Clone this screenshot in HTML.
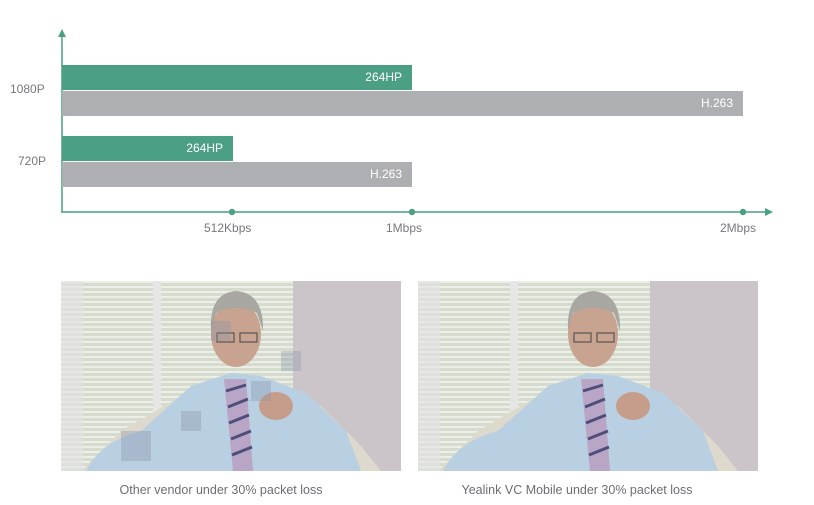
<!DOCTYPE html>
<html><head><style>
body{margin:0;width:814px;height:505px;background:#fff;position:relative;overflow:hidden;font-family:"Liberation Sans",sans-serif}
.t{position:absolute;font-size:12px;color:#77787b}
.b{position:absolute;left:62px;height:25px;color:#fff;font-size:12px;text-align:right;line-height:25px;box-sizing:border-box;padding-right:10px}
.g{background:#4a9f84}.y{background:#aeafb2}
.cap{position:absolute;top:483px;font-size:12.5px;color:#6d6e71;text-align:center;width:340px}
</style></head><body>
<svg width="814" height="260" style="position:absolute;left:0;top:0">
<line x1="62" y1="35" x2="62" y2="212" stroke="#4a9f84" stroke-width="1.5"/>
<polygon points="62,29 58,37 66,37" fill="#4a9f84"/>
<line x1="61" y1="212" x2="766" y2="212" stroke="#4a9f84" stroke-width="1.5"/>
<polygon points="773,212 765,208 765,216" fill="#4a9f84"/>
<circle cx="232" cy="212" r="3.2" fill="#4a9f84"/>
<circle cx="412" cy="212" r="3.2" fill="#4a9f84"/>
<circle cx="743" cy="212" r="3.2" fill="#4a9f84"/>
</svg>
<div class="b g" style="top:65px;width:350px">264HP</div>
<div class="b y" style="top:91px;width:681px">H.263</div>
<div class="b g" style="top:136px;width:171px">264HP</div>
<div class="b y" style="top:162px;width:350px">H.263</div>
<div class="t" style="left:10px;top:82px">1080P</div>
<div class="t" style="left:18px;top:154px">720P</div>
<div class="t" style="left:204px;top:221px">512Kbps</div>
<div class="t" style="left:386px;top:221px">1Mbps</div>
<div class="t" style="left:720px;top:221px">2Mbps</div>
<svg width="0" height="0" style="position:absolute"><defs>
<pattern id="bl" width="4" height="5" patternUnits="userSpaceOnUse"><rect width="4" height="5" fill="#d5dccd"/><rect width="4" height="2" fill="#eceee8"/></pattern>
<g id="sc">
<rect width="340" height="190" fill="#cbc5ca"/>
<rect width="232" height="190" fill="url(#bl)"/>
<rect x="0" width="22" height="190" fill="#e4e4e4" opacity=".6"/>
<rect x="92" width="8" height="190" fill="#e6e6e6"/>
<path d="M20 190 L60 150 L120 115 L200 100 L260 125 L300 165 L320 190Z" fill="#ddd9cc"/>
<path d="M25 190 Q40 160 80 150 L130 105 L170 92 L200 95 L245 112 L285 150 L300 190Z" fill="#b9cfe2"/>
<path d="M163 98 L185 98 L192 190 L172 190Z" fill="#b9a5c6"/>
<path d="M165 110 L185 104 M167 126 L187 118 M168 142 L188 134 M170 158 L190 150 M171 174 L191 166" stroke="#4d4f7a" stroke-width="3"/>
<ellipse cx="175" cy="53" rx="25" ry="33" fill="#c8a490"/>
<path d="M150 50 Q148 12 175 10 Q203 12 202 50 L196 32 Q175 22 155 32Z" fill="#a9a7a2"/>
<rect x="156" y="52" width="17" height="9" fill="none" stroke="#555" stroke-width="1.2"/>
<rect x="179" y="52" width="17" height="9" fill="none" stroke="#555" stroke-width="1.2"/>
<ellipse cx="215" cy="125" rx="17" ry="14" fill="#c69d8a"/>
</g></defs></svg>
<svg width="340" height="190" style="position:absolute;left:61px;top:281px"><use href="#sc"/>
<g opacity=".35" fill="#8a93a8"><rect x="150" y="40" width="20" height="20"/><rect x="190" y="100" width="20" height="20"/><rect x="60" y="150" width="30" height="30"/><rect x="220" y="70" width="20" height="20"/><rect x="120" y="130" width="20" height="20"/></g></svg>
<svg width="340" height="190" style="position:absolute;left:418px;top:281px"><use href="#sc"/></svg>
<div class="cap" style="left:51px">Other vendor under 30% packet loss</div>
<div class="cap" style="left:407px">Yealink VC Mobile under 30% packet loss</div>
</body></html>
